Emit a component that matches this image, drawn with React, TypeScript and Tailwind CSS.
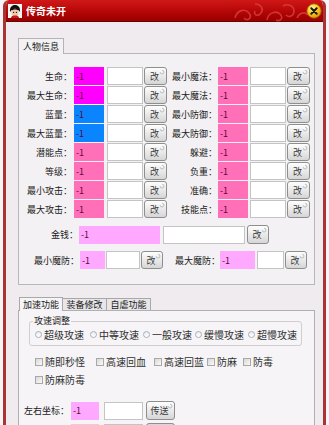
import React from "react";

const font = { fontFamily: '"Noto Sans CJK SC", "Liberation Sans", sans-serif' };

const left = [
  { label: "生命：", color: "bg-[#ff00ff]" },
  { label: "最大生命：", color: "bg-[#ff00ff]" },
  { label: "蓝量：", color: "bg-[#0a84ff]" },
  { label: "最大蓝量：", color: "bg-[#0a84ff]" },
  { label: "潜能点：", color: "bg-[#ff70b8]" },
  { label: "等级：", color: "bg-[#ff70b8]" },
  { label: "最小攻击：", color: "bg-[#ff70b8]" },
  { label: "最大攻击：", color: "bg-[#ff70b8]" },
];

const right = ["最小魔法：", "最大魔法：", "最小防御：", "最大防御：", "躲避：", "负重：", "准确：", "技能点："];

const radios = [
  { label: "超级攻速", w: "w-[55px]" },
  { label: "中等攻速", w: "w-[53px]" },
  { label: "一般攻速", w: "w-[52px]" },
  { label: "缓慢攻速", w: "w-[53px]" },
  { label: "超慢攻速", w: "w-[53px]" },
];

const checks = [
  { label: "随即秒怪", w: "w-[61px]" },
  { label: "高速回血", w: "w-[58px]" },
  { label: "高速回蓝", w: "w-[53px]" },
  { label: "防麻", w: "w-[36px]" },
  { label: "防毒", w: "w-[40px]" },
];

function Btn({ text = "改", w, h = "h-[18px]" }: { text?: string; w: string; h?: string }) {
  return (
    <div
      className={`relative ${w} ${h} flex items-center justify-center rounded-[3px] border border-[#8e8e8e] bg-gradient-to-b from-[#fefefe] to-[#d6d6d6] text-[9px] leading-none text-[#3a3a3a]`}
    >
      <span className="-ml-[2px]">{text}</span>
      <svg className="absolute right-[1px] top-[1px]" width="6" height="6" viewBox="0 0 6 6">
        <path d="M1.2 3.2a1.9 1.9 0 1 0 1.9-2" stroke="#b4b4b4" fill="none" strokeWidth="0.9" />
      </svg>
    </div>
  );
}

function Val({ color, w }: { color: string; w: string }) {
  return (
    <div className={`${color} ${w} h-[18px] flex items-center pl-[2px] text-[9px] leading-none text-[#5a0a3a]`}>
      -1
    </div>
  );
}

function Input({ w }: { w: string }) {
  return <div className={`${w} h-[18px] bg-white border border-[#c4c4c4]`} />;
}

function Avatar() {
  return (
    <svg width="14" height="14" viewBox="0 0 14 14">
      <rect width="14" height="14" fill="#f4f4f4" />
      <path d="M2 8C1.5 3 4 1 7 1s5.5 2 5 7l-1.5-2H3.5Z" fill="#111" />
      <ellipse cx="7" cy="8.5" rx="3.6" ry="3.8" fill="#f2c9a8" />
      <path d="M3.4 6.5C5 5 9 5 10.6 6.5L10 5H4Z" fill="#111" />
      <circle cx="5.6" cy="8.4" r="0.6" fill="#111" />
      <circle cx="8.4" cy="8.4" r="0.6" fill="#111" />
      <path d="M3 14c0-2 2-2.5 4-2.5s4 .5 4 2.5Z" fill="#c02020" />
    </svg>
  );
}

function Close() {
  return (
    <svg width="16" height="16" viewBox="0 0 16 16">
      <defs>
        <radialGradient id="cg" cx="0.4" cy="0.3" r="0.8">
          <stop offset="0" stopColor="#fff3a0" />
          <stop offset="0.5" stopColor="#f8c41c" />
          <stop offset="1" stopColor="#d88a00" />
        </radialGradient>
      </defs>
      <circle cx="8" cy="8" r="7.2" fill="url(#cg)" stroke="#9a5a00" strokeWidth="0.8" />
      <path d="M5.3 5.3l5.4 5.4M10.7 5.3l-5.4 5.4" stroke="#1a1a1a" strokeWidth="2" strokeLinecap="round" />
    </svg>
  );
}

export default function App() {
  return (
    <div className="w-[329px] h-[425px] overflow-hidden bg-[#f6f4f6] px-[3px]" style={font}>
      <div className="h-[440px] flex flex-col rounded-t-[6px] overflow-hidden border-x-[3px] border-[#a83434]">
        {/* title bar */}
        <div className="relative h-[22px] shrink-0 flex items-center bg-gradient-to-b from-[#d01818] via-[#b80808] to-[#980000] border-b border-[#700000] pl-[2px] pr-[1px]">
          <Avatar />
          <span className="ml-[4px] text-[10px] font-bold leading-none text-white">传奇未开</span>
          <svg className="absolute left-[225px] top-0" width="80" height="22" viewBox="0 0 80 22">
            <g stroke="#e04848" strokeWidth="1.6" fill="none" opacity="0.7">
              <path d="M4 18c2-8 10-10 14-5s-2 9-5 5" />
              <path d="M24 4c6 0 9 5 6 9s-8 2-6-2" />
              <path d="M36 20c1-7 9-10 13-6s0 8-4 6" />
              <path d="M52 6c5-3 11 0 11 5s-5 7-8 4" />
              <path d="M66 18c2-5 8-7 11-3" />
            </g>
          </svg>
          <div className="ml-auto">
            <Close />
          </div>
        </div>

        {/* content */}
        <div className="flex-1 bg-[#efebef] pl-[12px] pt-[16px]">
          {/* tab */}
          <div className="relative z-10 -mb-px w-[46px] h-[16px] flex items-center justify-center border border-b-0 border-[#b4b4b4] bg-[#f3f1f3] text-[9px] leading-none text-[#202020]">
            人物信息
          </div>
          <div className="w-[297px] border border-[#b8b8b8] bg-[#f3f1f3] pt-[13px] pb-[15px]">
            <div className="flex flex-col gap-[1px]">
              {left.map((l, i) => (
                <div key={l.label} className="flex items-center">
                  <div className="w-[53px] text-right text-[9px] leading-none text-[#202020]">{l.label}</div>
                  <div className="ml-[2px]">
                    <Val color={l.color} w="w-[30px]" />
                  </div>
                  <div className="ml-[3px]">
                    <Input w="w-[36px]" />
                  </div>
                  <div className="ml-[1px]">
                    <Btn w="w-[23px]" />
                  </div>
                  <div className="w-[50px] text-right text-[9px] leading-none text-[#202020]">{right[i]}</div>
                  <div className="ml-[1px]">
                    <Val color="bg-[#ff70b8]" w="w-[30px]" />
                  </div>
                  <div className="ml-[2px]">
                    <Input w="w-[36px]" />
                  </div>
                  <div className="ml-[1px]">
                    <Btn w="w-[23px]" />
                  </div>
                </div>
              ))}
            </div>

            <div className="mt-[7px] flex items-center">
              <div className="w-[59px] text-right text-[9px] leading-none text-[#202020]">金钱：</div>
              <div className="ml-[1px]">
                <Val color="bg-[#ffa8ff]" w="w-[81px]" />
              </div>
              <div className="ml-[3px]">
                <Input w="w-[82px]" />
              </div>
              <div className="ml-[2px]">
                <Btn w="w-[22px]" h="h-[19px]" />
              </div>
            </div>

            <div className="mt-[7px] flex items-center">
              <div className="w-[60px] text-right text-[9px] leading-none text-[#202020]">最小魔防：</div>
              <div className="ml-[1px]">
                <Val color="bg-[#ffa8ff]" w="w-[25px]" />
              </div>
              <div className="ml-[1px]">
                <Input w="w-[34px]" />
              </div>
              <div className="ml-[1px]">
                <Btn w="w-[22px]" />
              </div>
              <div className="ml-[12px] w-[45px] text-[9px] leading-none text-[#202020]">最大魔防：</div>
              <Val color="bg-[#ffa8ff]" w="w-[35px]" />
              <div className="ml-[2px]">
                <Input w="w-[27px]" />
              </div>
              <div className="ml-[1px]">
                <Btn w="w-[22px]" />
              </div>
            </div>
          </div>

          {/* second tab group */}
          <div className="mt-[12px] flex items-end pl-[1px]">
            <div className="relative z-10 -mb-px w-[44px] h-[14px] flex items-center justify-center border border-b-0 border-[#a8a8a8] bg-[#f6f4f6] text-[9px] leading-none text-[#202020]">
              加速功能
            </div>
            <div className="w-[44px] h-[12px] flex items-center justify-center border border-l-0 border-b-0 border-[#a8a8a8] bg-[#e8e6e8] text-[9px] leading-none text-[#202020]">
              装备修改
            </div>
            <div className="w-[44px] h-[12px] flex items-center justify-center border border-l-0 border-b-0 border-[#a8a8a8] bg-[#e8e6e8] text-[9px] leading-none text-[#202020]">
              自虐功能
            </div>
          </div>
          <div className="w-[297px] h-[200px] border border-[#b0b0b0] bg-[#f6f4f6] pt-[10px]">
            <div className="relative ml-[10px] w-[273px] h-[25px] rounded-[3px] border border-[#cfcfcf] flex items-center pl-[5px] pt-[2px]">
              <span className="absolute left-[3px] -top-[6px] bg-[#f6f4f6] px-[1px] text-[9px] leading-none text-[#202020]">
                攻速调整
              </span>
              {radios.map((r) => (
                <div key={r.label} className={`${r.w} flex items-center gap-[2px]`}>
                  <div className="w-[7px] h-[7px] rounded-full border border-[#a8b0bc] bg-gradient-to-b from-[#e8ecf2] to-white" />
                  <span className="text-[10px] leading-none text-[#303030]">{r.label}</span>
                </div>
              ))}
            </div>

            <div className="mt-[11px] ml-[16px] flex flex-col gap-[8px]">
              <div className="flex items-center">
                {checks.map((c) => (
                  <div key={c.label} className={`${c.w} flex items-center gap-[2px]`}>
                    <div className="w-[8px] h-[8px] border border-[#a8a8a8] bg-gradient-to-br from-[#d8d8d8] to-[#fafafa]" />
                    <span className="text-[10px] leading-none text-[#303030]">{c.label}</span>
                  </div>
                ))}
              </div>
              <div className="flex items-center gap-[2px]">
                <div className="w-[8px] h-[8px] border border-[#a8a8a8] bg-gradient-to-br from-[#d8d8d8] to-[#fafafa]" />
                <span className="text-[10px] leading-none text-[#303030]">防麻防毒</span>
              </div>
            </div>

            <div className="mt-[16px] flex flex-col gap-[3px]">
              <div className="flex items-center">
                <div className="w-[50px] text-right text-[9px] leading-none text-[#202020]">左右坐标：</div>
                <div className="ml-[2px]">
                  <Val color="bg-[#ffa8ff]" w="w-[28px]" />
                </div>
                <div className="ml-[5px]">
                  <Input w="w-[39px]" />
                </div>
                <div className="ml-[3px]">
                  <Btn text="传送" w="w-[29px]" h="h-[19px]" />
                </div>
              </div>
              {/* next row, only its top edge is in view */}
              <div className="flex items-center pl-[52px]">
                <div className="w-[28px] h-[18px] bg-[#f0c8d8]" />
                <div className="ml-[5px] w-[39px] h-[18px] bg-[#e4e2e4] border border-[#c4c4c4]" />
                <div className="ml-[3px] w-[29px] h-[19px] rounded-[3px] border border-[#8e8e8e] bg-[#d8d8d8]" />
              </div>
            </div>
          </div>
        </div>
      </div>
    </div>
  );
}
